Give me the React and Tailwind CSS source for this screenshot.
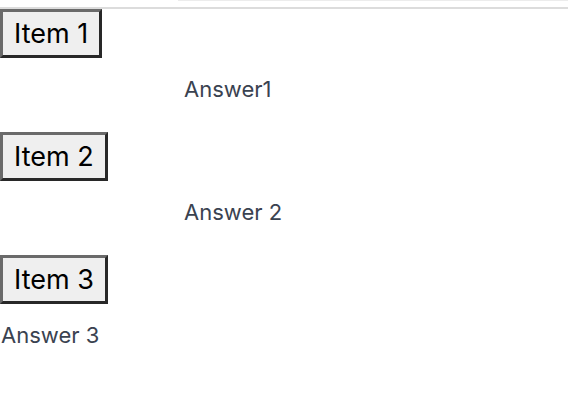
export default function App() {
  const items = [
    { q: "Item 1", a: "Answer1", indent: true },
    { q: "Item 2", a: "Answer 2", indent: true },
    { q: "Item 3", a: "Answer 3", indent: false },
  ];
  return (
    <div className="w-[568px] h-[417px] bg-white overflow-hidden" style={{ fontFamily: "Inter, 'Liberation Sans', sans-serif" }}>
      <div className="h-px ml-[178px] bg-[#ececec]" />
      <div className="h-[6px]" />
      <div className="h-[2px] bg-[#dcdcdc]" />
      {items.map((it, i) => (
        <div key={i} className="flex flex-col items-start">
          <button className="bg-[#efefef] text-black text-[27px] leading-[30px] px-[11px] pt-[7px] pb-[6px] border-[3px] border-t-[#6a6a6a] border-l-[#6a6a6a] border-b-[#282828] border-r-[#282828]">
            {it.q}
          </button>
          <div className={`text-[22px] leading-[26px] text-[#3a4250] mt-[18px] mb-[30px] ${it.indent ? "ml-[184px]" : "ml-[1px]"}`}>
            {it.a}
          </div>
        </div>
      ))}
    </div>
  );
}
